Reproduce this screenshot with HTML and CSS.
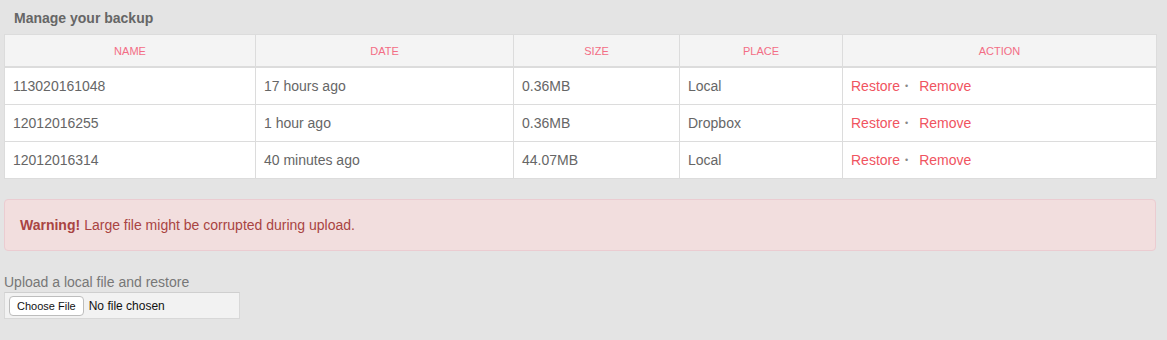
FILE: index.html
```html
<!DOCTYPE html>
<html>
<head>
<meta charset="utf-8">
<link rel="stylesheet" href="styles.css">
</head>
<body>
<div class="page">
  <h3 class="title">Manage your backup</h3>
  <table class="backups">
    <colgroup>
      <col class="c1"><col class="c2"><col class="c3"><col class="c4"><col class="c5">
    </colgroup>
    <thead>
      <tr><th>Name</th><th>Date</th><th>Size</th><th>Place</th><th>Action</th></tr>
    </thead>
    <tbody>
      <tr><td>113020161048</td><td>17 hours ago</td><td>0.36MB</td><td>Local</td><td><a class="act">Restore</a><span class="dot">•</span><a class="act">Remove</a></td></tr>
      <tr><td>12012016255</td><td>1 hour ago</td><td>0.36MB</td><td>Dropbox</td><td><a class="act">Restore</a><span class="dot">•</span><a class="act">Remove</a></td></tr>
      <tr><td>12012016314</td><td>40 minutes ago</td><td>44.07MB</td><td>Local</td><td><a class="act">Restore</a><span class="dot">•</span><a class="act">Remove</a></td></tr>
    </tbody>
  </table>
  <div class="alert"><strong>Warning!</strong> Large file might be corrupted during upload.</div>
  <div class="upload">
    <label class="upload-label">Upload a local file and restore</label>
    <div class="file-box">
      <span class="file-btn">Choose File</span>
      <span class="file-name">No file chosen</span>
    </div>
  </div>
</div>
</body>
</html>
```
FILE: styles.css
```css
html, body {
  margin: 0;
  padding: 0;
  background: #e4e4e4;
}
body {
  font-family: "Liberation Sans", Arial, sans-serif;
  color: #555;
}
.page {
  width: 1152px;
  padding: 0 4px;
}
.title {
  margin: 0;
  padding: 10px 0 0 10px;
  height: 24px;
  font-size: 14px;
  font-weight: bold;
  color: #666;
  line-height: 16px;
}
.backups {
  width: 1152px;
  border-collapse: collapse;
  table-layout: fixed;
  background: #fff;
  border: 1px solid #dcdcdc;
}
.c1 { width: 251px; }
.c2 { width: 258px; }
.c3 { width: 166px; }
.c4 { width: 163px; }
.c5 { width: 314px; }
.backups th {
  background: #f4f4f4;
  height: 31px;
  padding: 0;
  font-size: 11px;
  font-weight: normal;
  text-transform: uppercase;
  color: #f36d85;
  text-align: center;
  border-left: 1px solid #dcdcdc;
  border-bottom: 2px solid #dcdcdc;
  vertical-align: middle;
}
.backups td {
  height: 36px;
  padding: 0 8px;
  font-size: 14px;
  color: #666;
  border-left: 1px solid #dcdcdc;
  border-top: 1px solid #dcdcdc;
  vertical-align: middle;
}
.backups tbody tr:first-child td { border-top: none; }
.act {
  color: #f0545f;
  font-weight: normal;
  text-decoration: none;
}
.dot {
  color: #888;
  font-size: 9px;
  margin: 0 11px 0 5px;
  vertical-align: 2px;
}
.alert {
  margin-top: 20px;
  height: 52px;
  box-sizing: border-box;
  padding: 0 15px;
  display: flex;
  align-items: center;
  background: #f2dede;
  border: 1px solid #ebccd1;
  border-radius: 4px;
  color: #a94442;
  font-size: 14px;
}
.alert strong { margin-right: 4px; }
.upload {
  margin-top: 23px;
}
.upload-label {
  display: block;
  font-size: 14px;
  color: #777;
  line-height: 17px;
  margin-bottom: 1px;
}
.file-box {
  width: 236px;
  height: 27px;
  box-sizing: border-box;
  background: #f2f2f2;
  border: 1px solid #d8d8d8;
  border-top-color: #cfcfcf;
  display: flex;
  align-items: center;
  padding-left: 4px;
  font-size: 12px;
  color: #222;
}
.file-btn {
  display: inline-block;
  height: 18px;
  line-height: 18px;
  padding: 0 7px;
  background: #fff;
  border: 1px solid #bdbdbd;
  border-radius: 4px;
  font-size: 11px;
  color: #111;
}
.file-name {
  margin-left: 5px;
  font-size: 12px;
  color: #111;
}
```
